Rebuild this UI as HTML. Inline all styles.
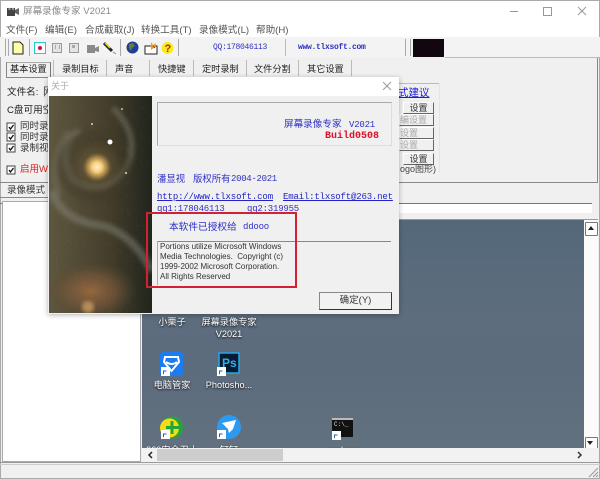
<!DOCTYPE html>
<html><head><meta charset="utf-8"><style>
html,body{margin:0;padding:0}
body{width:600px;height:479px;overflow:hidden;position:relative;background:#f0f0f0;font:9.5px "Liberation Sans","Noto Sans CJK SC",sans-serif;color:#333}
#w div,#w span.a{position:absolute;white-space:nowrap}
#w{position:absolute;left:0;top:0;width:600px;height:479px;filter:blur(.3px)}
.m{top:24px;color:#555;font-size:9.6px;line-height:13px}
.t{top:62px;font-size:9.2px;line-height:14px;color:#222}
.tb{top:60px;width:1px;height:16px;background:#bbb}
.mono{font-family:"Liberation Mono","Noto Sans CJK SC",monospace}
.bl{color:#3030c8}
.btn{background:#f0f0f0;border:1px solid #fff;border-right-color:#666;border-bottom-color:#666;text-align:center;font-size:9px;line-height:10px;box-sizing:border-box;color:#333}
.dis{color:#aaa}
.dk{color:#fff;font-size:9.2px;text-shadow:0 1px 2px #000;text-align:center;line-height:12px}
.sc{position:absolute;width:9px;height:9px;background:#fff;border:1px solid #777;border-radius:1px}
</style></head><body><div id="w">
<div style="left:0;top:0;width:600px;height:37px;background:#fff"></div>
<div style="left:0;top:0;width:600px;height:1px;background:#aaa"></div>
<div style="left:0;top:0;width:1px;height:479px;background:#aaa"></div>
<div style="left:599px;top:0;width:1px;height:479px;background:#aaa"></div>
<div style="left:0;top:478px;width:600px;height:1px;background:#aaa"></div>

<svg style="position:absolute;left:7px;top:7px" width="12" height="9"><path d="M0 1h8v8H0z" fill="#444"/><path d="M8 3l4-2v7l-4-2z" fill="#666"/><circle cx="2.500" cy="2" r="1.200" fill="#999"/><circle cx="6" cy="2" r="1.200" fill="#999"/></svg>
<div style="left:23px;top:5px;font-size:9.6px;line-height:14px;color:#8a8a8a">屏幕录像专家 V2021</div>
<div style="left:510px;top:11px;width:8px;height:1px;background:#999"></div>
<div style="left:543px;top:7px;width:7px;height:7px;border:1px solid #999"></div>
<svg style="position:absolute;left:577px;top:6px" width="11" height="11"><path d="M1 1l8 8M9 1l-8 8" stroke="#999" fill="none"/></svg>

<div class="m" style="left:6px">文件(F)</div>
<div class="m" style="left:45px">编辑(E)</div>
<div class="m" style="left:85px">合成截取(J)</div>
<div class="m" style="left:141px">转换工具(T)</div>
<div class="m" style="left:199px">录像模式(L)</div>
<div class="m" style="left:256px">帮助(H)</div>

<!-- toolbar -->
<div style="left:0;top:37px;width:600px;height:20px;background:#f3f3f3"></div>
<div style="left:5px;top:39px;width:2px;height:17px;border-left:1px solid #aaa;border-right:1px solid #aaa"></div>
<svg style="position:absolute;left:12px;top:41px" width="12" height="14"><path d="M1 1h7l3 3v9H1z" fill="#ffffa8" stroke="#222"/></svg>
<div style="left:29px;top:39px;width:1px;height:17px;background:#aaa"></div>
<div style="left:34px;top:42px;width:10px;height:10px;background:#fff;border:1px solid #2cc"></div>
<div style="left:38px;top:46px;width:4px;height:4px;border-radius:2px;background:#d01030"></div>
<div style="left:52px;top:43px;width:8px;height:8px;background:#e4e4e4;border:1px solid #999"></div>
<div style="left:55px;top:45px;width:3px;height:4px;border:solid #aaa;border-width:0 1px"></div>
<div style="left:69px;top:43px;width:8px;height:8px;background:#e4e4e4;border:1px solid #999"></div>
<div style="left:72px;top:45px;width:3px;height:3px;background:#aaa"></div>
<svg style="position:absolute;left:86px;top:41px" width="14" height="13"><path d="M1 4h8v8H1zM9 7l4-2v6l-4-1z" fill="#8a8a8a"/></svg>
<svg style="position:absolute;left:103px;top:41px" width="14" height="14"><path d="M1 2l8 8" stroke="#222" stroke-width="3"/><path d="M2 2l5 5" stroke="#dd0" stroke-width="1.500"/><path d="M10 11l3 2" stroke="#888"/></svg>
<div style="left:120px;top:39px;width:1px;height:17px;background:#aaa"></div>
<svg style="position:absolute;left:126px;top:41px" width="13" height="13"><circle cx="6.500" cy="6.500" r="6" fill="#1d3f9a"/><path d="M3 3l4-1 2 3-3 2-1 3-2-3z" fill="#6a7a30"/></svg>
<svg style="position:absolute;left:144px;top:41px" width="14" height="14"><path d="M1 5h12v8H1z" fill="#fff" stroke="#222"/><path d="M7 1l2 3 3-2-1 4-4 3z" fill="#e8a020"/><path d="M9 5l2 2" stroke="#c22"/></svg>
<svg style="position:absolute;left:161px;top:41px" width="13" height="14"><circle cx="6.500" cy="7" r="6" fill="#f4ee20"/><text x="3.500" y="11" font-size="11" font-weight="bold" fill="#d01818" font-family="Liberation Sans">?</text></svg>
<div style="left:178px;top:39px;width:1px;height:17px;background:#aaa"></div>
<div class="mono" style="left:213px;top:42px;font-size:8px;line-height:12px;color:#3030c0;letter-spacing:-.3px">QQ:178046113</div>
<div style="left:285px;top:39px;width:1px;height:17px;background:#bbb"></div>
<div class="mono" style="left:298px;top:42px;font-size:8px;line-height:12px;color:#3030c0;letter-spacing:-.3px;font-weight:bold">www.tlxsoft.com</div>
<div style="left:405px;top:39px;width:4px;height:17px;border-left:1px solid #aaa;border-right:1px solid #aaa"></div>
<div style="left:413px;top:39px;width:31px;height:18px;background:#12060f"></div>

<!-- panel -->
<div style="left:445px;top:57px;width:154px;height:1px;background:#bbb"></div>
<div style="left:597px;top:58px;width:1px;height:125px;background:#888"></div>
<div style="left:0;top:182px;width:598px;height:1px;background:#888"></div>

<!-- tabs -->
<div style="left:6px;top:62px;width:43px;height:14px;border:1px solid #fff;border-right-color:#777;border-bottom-color:#888;border-top-color:#aaa;border-left-color:#888"></div>
<div class="t" style="left:10px">基本设置</div>
<div class="tb" style="left:53px"></div><div class="t" style="left:62px">录制目标</div>
<div class="tb" style="left:106px"></div><div class="t" style="left:115px">声音</div>
<div class="tb" style="left:149px"></div><div class="t" style="left:158px">快捷键</div>
<div class="tb" style="left:193px"></div><div class="t" style="left:202px">定时录制</div>
<div class="tb" style="left:246px"></div><div class="t" style="left:254px">文件分割</div>
<div class="tb" style="left:298px"></div><div class="t" style="left:307px">其它设置</div>
<div class="tb" style="left:351px"></div>

<div style="left:7px;top:86px;font-size:9.6px;line-height:14px;color:#222">文件名:</div>
<div style="left:43px;top:85px;font-size:11px;line-height:15px;color:#444">网</div>
<div style="left:7px;top:104px;font-size:9.6px;line-height:14px;color:#222">C盘可用空</div>
<svg style="position:absolute;left:6px;top:122px" width="11" height="54"><g fill="#fff" stroke="#444"><rect x="1" y="1" width="8" height="8"/><rect x="1" y="11" width="8" height="8"/><rect x="1" y="22" width="8" height="8"/><rect x="1" y="44" width="8" height="8"/></g><path d="M3 5l1.500 2 3-4M3 15l1.500 2 3-4M3 26l1.500 2 3-4M3 48l1.500 2 3-4" stroke="#111" fill="none" stroke-width="1.300"/></svg>
<div style="left:20px;top:120px;line-height:13px;color:#333">同时录像</div>
<div style="left:20px;top:131px;line-height:13px;color:#333">同时录像</div>
<div style="left:20px;top:142px;line-height:13px;color:#333">录制视频</div>
<div style="left:20px;top:163px;line-height:14px;color:#d82020">启用WT</div>
<div style="left:7px;top:184px;line-height:14px;color:#333">录像模式</div>
<div style="left:0;top:197px;width:146px;height:1px;background:#888"></div>

<!-- right group -->
<div style="left:398px;top:83px;width:42px;height:1px;background:#bbb"></div>
<div style="left:439px;top:83px;width:1px;height:90px;background:#e4e4e4"></div>
<div style="left:398px;top:86px;font-size:10.500px;line-height:14px;color:#1a1ae0;text-decoration:underline">式建议</div>
<div class="btn" style="left:403px;top:102px;width:31px;height:12px">设置</div>
<div class="btn dis" style="left:399px;top:114px;width:35px;height:12px;text-align:left">编设置</div>
<div class="btn dis" style="left:399px;top:127px;width:35px;height:12px;text-align:left">设置</div>
<div class="btn dis" style="left:399px;top:139px;width:35px;height:12px;text-align:left">设置</div>
<div class="btn" style="left:403px;top:153px;width:31px;height:12px">设置</div>
<div style="left:400px;top:162px;font-size:9px;line-height:14px;color:#444">ogo图形)</div>

<!-- strip -->
<div style="left:0;top:203px;width:592px;height:1px;background:#777"></div>
<div style="left:146px;top:204px;width:446px;height:9px;background:#fff"></div>
<div style="left:142px;top:219px;width:456px;height:1px;background:#999"></div>

<!-- left list -->
<div style="left:2px;top:201px;width:139px;height:261px;background:#fff;border:1px solid #aaa;box-sizing:border-box"></div>

<!-- desktop -->
<div style="left:142px;top:220px;width:442px;height:228px;background:linear-gradient(180deg,#54687a 0%,#5d6d7e 45%,#5c6b7d 60%,#62717f 100%)"></div>
<div style="left:584px;top:220px;width:14px;height:242px;background:#fbfbfb"></div>
<div class="sc" style="left:585px;top:222px;width:11px;height:12px"></div>
<div style="left:588px;top:226px;border:3.500px solid transparent;border-top:0;border-bottom:4px solid #222"></div>
<div class="sc" style="left:585px;top:437px;width:11px;height:10px"></div>
<div style="left:587px;top:441px;border:3.500px solid transparent;border-bottom:0;border-top:4px solid #222"></div>
<div style="left:142px;top:448px;width:456px;height:14px;background:#f2f2f2"></div>
<div style="left:157px;top:449px;width:126px;height:12px;background:#cdcdcd"></div>
<svg style="position:absolute;left:147px;top:451px" width="7" height="9"><path d="M5 1L2 4l3 3" stroke="#222" fill="none" stroke-width="1.500"/></svg>
<svg style="position:absolute;left:576px;top:451px" width="7" height="9"><path d="M2 1l3 3-3 3" stroke="#333" fill="none" stroke-width="1.500"/></svg>
<div style="left:0;top:462px;width:600px;height:1px;background:#999"></div>
<div style="left:0;top:464px;width:600px;height:1px;background:#ccc"></div>
<svg style="position:absolute;left:588px;top:466px" width="11" height="12"><path d="M10 2L1 11M10 6l-5 5M10 9l-2 2" stroke="#999"/></svg>

<div class="dk" style="left:147px;top:316px;width:50px">小栗子</div>
<div class="dk" style="left:195px;top:316px;width:68px">屏幕录像专家<br>V2021</div>
<div class="dk" style="left:142px;top:379px;width:60px">电脑管家</div>
<div class="dk" style="left:199px;top:379px;width:60px">Photosho...</div>
<div class="dk" style="left:140px;top:444px;width:64px;height:4px;overflow:hidden">360安全卫士</div>
<div class="dk" style="left:204px;top:444px;width:50px;height:4px;overflow:hidden">钉钉</div>
<div class="dk" style="left:318px;top:444px;width:50px;height:4px;overflow:hidden">cmd.exe</div>

<svg style="position:absolute;left:160px;top:352px" width="24" height="24"><rect x="0" y="0" width="23" height="24" rx="3" fill="#1a7cf0"/><path d="M5 5h13l1 5-7.500 9-7.500-9z" fill="none" stroke="#fff" stroke-width="2"/><path d="M6 10q6 4 11 0" stroke="#fff" fill="none" stroke-width="2"/></svg>
<svg style="position:absolute;left:218px;top:352px" width="23" height="22"><rect x="1" y="1" width="20" height="20" fill="#061c33" stroke="#26a8ea" stroke-width="1.500"/><text x="4" y="15" font-size="12" font-weight="bold" fill="#30b0f0" font-family="Liberation Sans">Ps</text></svg>
<svg style="position:absolute;left:160px;top:416px" width="24" height="23"><circle cx="12" cy="11.500" r="11" fill="#24a53a"/><circle cx="9.500" cy="12" r="9.500" fill="#f6dc18"/><path d="M12 5v13M6 11.500h13" stroke="#22a83a" stroke-width="3"/></svg>
<svg style="position:absolute;left:217px;top:415px" width="24" height="24"><circle cx="12" cy="12" r="12" fill="#2d9af0"/><path d="M5 8l14-3-3 9-4 4-1-4z" fill="#fff"/></svg>
<div style="left:332px;top:418px;width:21px;height:17px;background:#111;border-top:2px solid #bbb"></div>
<div class="mono" style="left:334px;top:421px;font-size:6px;line-height:7px;color:#ddd">C:\_</div>
<svg style="position:absolute;left:161px;top:367px" width="9" height="9"><rect width="9" height="9" fill="#fff"/><path d="M2.500 7V4h3" stroke="#2060c0" fill="none"/></svg>
<svg style="position:absolute;left:217px;top:367px" width="9" height="9"><rect width="9" height="9" fill="#fff"/><path d="M2.500 7V4h3" stroke="#2060c0" fill="none"/></svg>
<svg style="position:absolute;left:161px;top:430px" width="9" height="9"><rect width="9" height="9" fill="#fff"/><path d="M2.500 7V4h3" stroke="#2060c0" fill="none"/></svg>
<svg style="position:absolute;left:217px;top:430px" width="9" height="9"><rect width="9" height="9" fill="#fff"/><path d="M2.500 7V4h3" stroke="#2060c0" fill="none"/></svg>
<svg style="position:absolute;left:332px;top:431px" width="9" height="9"><rect width="9" height="9" fill="#fff"/><path d="M2.500 7V4h3" stroke="#2060c0" fill="none"/></svg>

<!-- dialog -->
<div style="left:48px;top:77px;width:351px;height:237px;background:#f0f0f0;box-shadow:0 1px 5px rgba(0,0,0,.3)"></div>
<div style="left:48px;top:77px;width:351px;height:19px;background:#fff"></div>
<div style="left:51px;top:80px;font-size:9px;line-height:13px;color:#aaa">关于</div>
<svg style="position:absolute;left:382px;top:81px" width="11" height="11"><path d="M1 1l8 8M9 1l-8 8" stroke="#999" fill="none"/></svg>
<svg style="position:absolute;left:49px;top:96px" width="103" height="217">
<defs>
<radialGradient id="c" cx="50%" cy="50%" r="50%"><stop offset="0" stop-color="#fff4c8"/><stop offset=".35" stop-color="#f5cc78"/><stop offset=".7" stop-color="#b08a48" stop-opacity=".75"/><stop offset="1" stop-color="#6a5a3a" stop-opacity="0"/></radialGradient>
<radialGradient id="d" cx="50%" cy="50%" r="50%"><stop offset="0" stop-color="#94683e"/><stop offset=".55" stop-color="#75563a" stop-opacity=".7"/><stop offset="1" stop-color="#5a4a30" stop-opacity="0"/></radialGradient>
<linearGradient id="b" x1="0" y1="0" x2="1" y2="0"><stop offset="0" stop-color="#5e573f"/><stop offset=".6" stop-color="#423c2a"/><stop offset="1" stop-color="#20251d"/></linearGradient>
<filter id="n"><feTurbulence baseFrequency=".45" numOctaves="2" seed="4"/><feColorMatrix values="0 0 0 0 .8 0 0 0 0 .8 0 0 0 0 .75 1.200 0 0 0 -.55"/></filter>
<filter id="s"><feGaussianBlur stdDeviation="2"/></filter>
</defs>
<rect width="103" height="217" fill="url(#b)"/>
<g filter="url(#s)">
<path d="M64 12Q92 40 78 70Q56 104 24 84Q6 52 30 34" fill="none" stroke="#8d8a78" stroke-width="6" opacity=".4"/>
<path d="M3 95Q12 125 55 130Q85 140 103 175" fill="none" stroke="#8b8b80" stroke-width="8" opacity=".45"/>
<path d="M20 35Q-2 70 10 100" fill="none" stroke="#7c7866" stroke-width="7" opacity=".35"/>
<ellipse cx="45" cy="70" rx="38" ry="36" fill="#3e3a28" opacity=".4"/>
</g>
<circle cx="48" cy="71" r="28" fill="url(#c)" opacity=".14"/>
<circle cx="48" cy="71" r="15" fill="url(#c)"/>
<ellipse cx="42" cy="195" rx="46" ry="30" fill="url(#d)"/>
<circle cx="39" cy="211" r="6" fill="#d8a868" opacity=".7" filter="url(#s)"/>
<rect width="103" height="217" filter="url(#n)" opacity=".25"/>
<circle cx="61" cy="46" r="2.500" fill="#fff"/><circle cx="73" cy="13" r="1" fill="#e8c080"/><circle cx="43" cy="28" r="1" fill="#e8d8a8"/><circle cx="77" cy="77" r="1" fill="#f0e0a0"/>
</svg>

<div style="left:157px;top:102px;width:233px;height:42px;border:1px solid #aaa;border-right-color:#ddd;border-bottom-color:#ddd"></div>
<div class="bl" style="left:284px;top:118px;font-size:9.600px;line-height:14px">屏幕录像专家</div>
<div class="mono bl" style="left:349px;top:118px;font-size:9px;letter-spacing:-.2px;line-height:14px">V2021</div>
<div class="mono" style="left:325px;top:130px;font-size:10px;line-height:14px;color:#e01028;font-weight:bold">Build0508</div>
<div class="bl" style="left:157px;top:172px;font-size:9.400px;line-height:14px">潘显视</div>
<div class="bl" style="left:193px;top:172px;font-size:9.400px;line-height:14px">版权所有</div>
<div class="mono bl" style="left:231px;top:172px;font-size:9px;letter-spacing:-.3px;line-height:14px">2004-2021</div>
<div class="mono" style="left:157px;top:191px;font-size:9px;letter-spacing:-.13px;line-height:13px;color:#2222c8;text-decoration:underline">http://www.tlxsoft.com</div>
<div class="mono" style="left:283px;top:191px;font-size:9px;letter-spacing:-.17px;line-height:13px;color:#2222c8;text-decoration:underline">Email:tlxsoft@263.net</div>
<div class="mono" style="left:157px;top:203px;height:9px;overflow:hidden;font-size:9px;letter-spacing:-.2px;line-height:13px;color:#3030c0">qq1:178046113</div>
<div class="mono" style="left:247px;top:203px;height:9px;overflow:hidden;font-size:9px;letter-spacing:-.2px;line-height:13px;color:#3030c0">qq2:319955</div>
<div class="bl" style="left:169px;top:220px;font-size:9.700px;line-height:15px">本软件已授权给</div>
<div class="mono bl" style="left:243px;top:220px;font-size:9px;letter-spacing:-.2px;line-height:15px">ddooo</div>
<div style="left:157px;top:241px;width:234px;height:1px;background:#888"></div>
<div style="left:157px;top:241px;width:1px;height:44px;background:#aaa"></div>
<div style="left:160px;top:242px;font-size:8px;line-height:10px;color:#333">Portions utilize Microsoft Windows<br>Media Technologies.&nbsp; Copyright (c)<br>1999-2002 Microsoft Corporation.<br>All Rights Reserved</div>
<div style="left:146px;top:212px;width:147px;height:72px;border:2px solid #d42030"></div>
<div style="left:319px;top:292px;width:73px;height:18px;background:#f2f2f2;border:1px solid #333;border-top-color:#888;border-left-color:#888;box-sizing:border-box;text-align:center;font-size:9.500px;line-height:16px;color:#333">确定(Y)</div>
</div></body></html>
